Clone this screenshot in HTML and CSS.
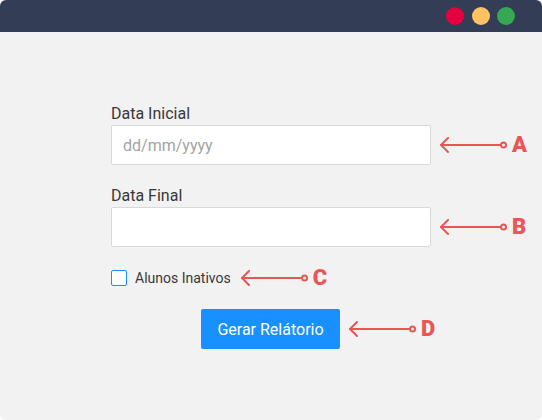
FILE: index.html
```html
<!DOCTYPE html>
<html lang="pt">
<head>
<meta charset="utf-8">
<title>Relatório</title>
<link rel="stylesheet" href="styles.css">
</head>
<body>
<div class="window">
  <div class="titlebar">
    <span class="dot dot-red"></span>
    <span class="dot dot-yellow"></span>
    <span class="dot dot-green"></span>
  </div>
  <div class="content">
    <label class="label" for="ini">Data Inicial</label>
    <div class="row">
      <input class="field" id="ini" type="text" placeholder="dd/mm/yyyy">
      <span class="note">
        <svg class="arrow" width="67" height="16" viewBox="0 0 67 16"><polyline points="8,1 1,8 8,15" /><line x1="1" y1="8" x2="61" y2="8" /><circle cx="63.5" cy="8" r="2.5" /></svg>
        <span class="letter">A</span>
      </span>
    </div>

    <label class="label label-second" for="fim">Data Final</label>
    <div class="row">
      <input class="field" id="fim" type="text">
      <span class="note">
        <svg class="arrow" width="67" height="16" viewBox="0 0 67 16"><polyline points="8,1 1,8 8,15" /><line x1="1" y1="8" x2="61" y2="8" /><circle cx="63.5" cy="8" r="2.5" /></svg>
        <span class="letter">B</span>
      </span>
    </div>

    <div class="row check-row">
      <span class="checkbox"></span>
      <span class="check-label">Alunos Inativos</span>
      <span class="note note-check">
        <svg class="arrow" width="67" height="16" viewBox="0 0 67 16"><polyline points="8,1 1,8 8,15" /><line x1="1" y1="8" x2="61" y2="8" /><circle cx="63.5" cy="8" r="2.5" /></svg>
        <span class="letter">C</span>
      </span>
    </div>

    <div class="row button-row">
      <button class="btn" type="button">Gerar Relátorio</button>
      <span class="note">
        <svg class="arrow" width="67" height="16" viewBox="0 0 67 16"><polyline points="8,1 1,8 8,15" /><line x1="1" y1="8" x2="61" y2="8" /><circle cx="63.5" cy="8" r="2.5" /></svg>
        <span class="letter">D</span>
      </span>
    </div>
  </div>
</div>
</body>
</html>
```
FILE: styles.css
```css
* { box-sizing: border-box; }
html, body {
  margin: 0;
  padding: 0;
  background: #ffffff;
}
body {
  font-family: Roboto, "Liberation Sans", Arial, sans-serif;
}
.window {
  width: 542px;
  height: 420px;
  border-radius: 6px;
  overflow: hidden;
  background: #f2f2f2;
  display: flex;
  flex-direction: column;
}
.titlebar {
  height: 32px;
  flex: none;
  background: #333d55;
  display: flex;
  align-items: center;
  justify-content: flex-end;
  gap: 7.5px;
  padding-right: 27px;
}
.dot {
  width: 18px;
  height: 18px;
  border-radius: 50%;
}
.dot-red { background: #e5003f; }
.dot-yellow { background: #ffc262; }
.dot-green { background: #34a853; }
.content {
  padding: 72px 0 0 111px;
  display: flex;
  flex-direction: column;
  align-items: flex-start;
}
.label {
  display: block;
  font-size: 16px;
  line-height: 19px;
  color: #383838;
  margin-bottom: 2px;
}
.label-second {
  margin-top: 21px;
}
.row {
  display: flex;
  align-items: center;
}
.field {
  width: 320px;
  height: 40px;
  border: 1px solid #d9d9d9;
  border-radius: 2px;
  background: #ffffff;
  padding: 0 11px;
  font-family: inherit;
  font-size: 16px;
  color: #333;
  outline: none;
}
.field::placeholder {
  color: #a3a3a3;
}
.note {
  display: flex;
  align-items: center;
  margin-left: 9px;
}
.arrow {
  display: block;
  fill: none;
  stroke: #e85656;
  stroke-width: 2;
  stroke-linecap: round;
  stroke-linejoin: round;
}
.letter {
  margin-left: 5px;
  font-size: 22px;
  font-weight: 900;
  line-height: 20px;
  color: #e85656;
}
.check-row {
  margin-top: 21px;
}
.checkbox {
  width: 16px;
  height: 16px;
  border: 1px solid #1890ff;
  border-radius: 2px;
  background: #ffffff;
}
.check-label {
  margin-left: 8px;
  font-size: 14px;
  line-height: 16px;
  color: #383838;
}
.note-check {
  margin-left: 10px;
}
.button-row {
  margin-top: 21px;
  padding-left: 90px;
}
.btn {
  width: 139px;
  height: 40px;
  border: none;
  border-radius: 2px;
  background: #1890ff;
  color: #ffffff;
  font-family: inherit;
  font-size: 16px;
  padding: 0;
}
```
